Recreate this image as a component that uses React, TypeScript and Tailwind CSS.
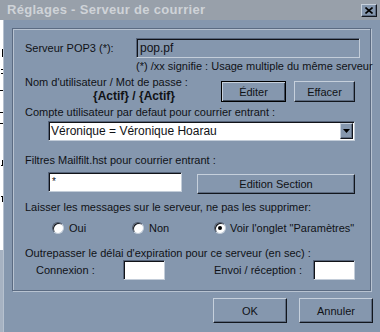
import React from 'react';

const raised =
  'bg-[#8597ae] border border-t-[#c6d0dc] border-l-[#c6d0dc] border-r-[#12161d] border-b-[#12161d] shadow-[inset_-1px_-1px_0_#5d6b80]';
const sunkenWhite =
  'bg-white border border-t-[#56647a] border-l-[#56647a] border-r-[#c3cdd9] border-b-[#c3cdd9] shadow-[inset_1px_1px_0_#111318]';

function Radio({ checked }: { checked?: boolean }) {
  return (
    <div className="w-[12px] h-[12px] rounded-full bg-white border border-t-[#4a566a] border-l-[#4a566a] border-r-[#c3cdd9] border-b-[#c3cdd9] shadow-[inset_1px_1px_0_#15181e] flex items-center justify-center">
      {checked && <div className="w-[4px] h-[4px] rounded-full bg-black" />}
    </div>
  );
}

export default function App() {
  return (
    <div className="w-[380px] h-[332px] overflow-hidden flex flex-col bg-[#8597ae] font-['Liberation_Sans',Arial,sans-serif] text-[11px] text-[#101216] leading-[12px]">
      {/* Title bar (inactive) */}
      <div className="h-[20px] flex items-center justify-between bg-[#98a0aa] pl-[7px] pr-[3px] shrink-0">
        <span className="text-[13px] font-bold tracking-[0.3px] text-[#cfd3d8]">
          Réglages - Serveur de courrier
        </span>
        <div className={`w-[16px] h-[13px] flex items-center justify-center ${raised}`}>
          <svg width="8" height="7" viewBox="0 0 8 7">
            <path d="M0.5 0.5 L7.5 6.5 M7.5 0.5 L0.5 6.5" stroke="#000" strokeWidth="1.6" />
          </svg>
        </div>
      </div>

      <div className="flex flex-1">
        {/* bits of the window behind */}
        <div className="w-[3px] flex flex-col overflow-hidden">
          <div className="h-[230px] bg-white flex flex-col items-end">
            <div className="h-[29px]" />
            <div className="h-[8px] w-px bg-black" />
            <div className="h-[12px]" />
            <div className="h-[5px] w-[2px] border-t border-b border-black" />
            <div className="h-[16px]" />
            <div className="h-px w-[3px] bg-black" />
            <div className="h-[21px]" />
            <div className="h-px w-[3px] bg-black" />
            <div className="h-[10px]" />
            <div className="h-px w-[3px] bg-black" />
            <div className="h-[36px]" />
            <div className="h-[6px] w-[2px] border-r border-b border-black" />
            <div className="h-[30px]" />
            <div className="h-[6px] w-[2px] border-r border-t border-black" />
          </div>
          <div className="flex-1 bg-[#a6b2c2]" />
        </div>
        <div className="w-px bg-[#b6c1cf]" />

        {/* dialog body */}
        <div className="flex-1 flex flex-col pl-[8px] pt-[8px]">
          <div className="w-[359px] h-[263px] border border-[#5b6b82] shadow-[1px_1px_0_#b8c3d1,inset_1px_1px_0_#b8c3d1] pl-[12px] flex flex-col">
            {/* Serveur */}
            <div className="mt-[9px] flex items-center h-[20px]">
              <span className="w-[111px]">Serveur POP3 (*):</span>
              <div className="w-[224px] h-[20px] bg-[#8597ae] border border-t-[#56647a] border-l-[#56647a] border-r-[#c3cdd9] border-b-[#c3cdd9] shadow-[inset_1px_1px_0_#111318] flex items-center pl-[3px] text-[12px]">
                pop.pf
              </div>
            </div>
            <div className="mt-[2px] ml-[111px] whitespace-nowrap">
              (*) /xx signifie : Usage multiple du même serveur
            </div>

            {/* Nom d'utilisateur / Mot de passe */}
            <div className="flex items-start">
              <div className="w-[196px] flex flex-col">
                <div className="mt-[4px] whitespace-nowrap">Nom d'utilisateur / Mot de passe :</div>
                <div className="mt-[2px] pl-[68px] font-bold text-[12px]">{'{Actif} / {Actif}'}</div>
              </div>
              <div className="mt-[9px] flex gap-[8px]">
                <div className="w-[65px] h-[21px] flex items-center justify-center bg-[#8597ae] border border-black shadow-[inset_1px_1px_0_#c6d0dc,inset_-1px_-1px_0_#3f4a5a]">
                  Éditer
                </div>
                <div className={`w-[61px] h-[21px] flex items-center justify-center ${raised}`}>
                  Effacer
                </div>
              </div>
            </div>

            <div className="mt-[4px] whitespace-nowrap">Compte utilisateur par defaut pour courrier entrant :</div>
            <div className={`mt-[3px] ml-[23px] w-[307px] h-[20px] flex items-center justify-between ${sunkenWhite}`}>
              <span className="pl-[2px] text-[12px]">Véronique = Véronique Hoarau</span>
              <div className={`w-[13px] h-[16px] mr-[1px] flex items-center justify-center ${raised}`}>
                <svg width="7" height="4" viewBox="0 0 7 4">
                  <path d="M0 0 H7 L3.5 4 Z" fill="#000" />
                </svg>
              </div>
            </div>

            <div className="mt-[13px] whitespace-nowrap">Filtres Mailfilt.hst pour courrier entrant :</div>
            <div className="flex items-start">
              <div className={`mt-[6px] ml-[23px] w-[134px] h-[20px] pl-[3px] pt-[3px] text-[10px] ${sunkenWhite}`}>*</div>
              <div className={`mt-[8px] ml-[15px] w-[158px] h-[20px] flex items-center justify-center ${raised}`}>
                Edition Section
              </div>
            </div>

            <div className="mt-[7px] whitespace-nowrap">Laisser les messages sur le serveur, ne pas les supprimer:</div>
            <div className="mt-[9px] flex items-center h-[12px] pl-[27px]">
              <div className="w-[80px] flex items-center gap-[5px]">
                <Radio />
                <span>Oui</span>
              </div>
              <div className="w-[82px] flex items-center gap-[5px]">
                <Radio />
                <span>Non</span>
              </div>
              <div className="flex items-center gap-[4px]">
                <Radio checked />
                <span className="whitespace-nowrap">Voir l'onglet "Paramètres"</span>
              </div>
            </div>

            <div className="mt-[13px] whitespace-nowrap">Outrepasser le délai d'expiration pour ce serveur (en sec) :</div>
            <div className="mt-[1px] flex items-center h-[20px] pl-[11px]">
              <span className="w-[87px]">Connexion :</span>
              <div className={`w-[42px] h-[20px] ${sunkenWhite}`} />
              <span className="ml-[49px] w-[99px] whitespace-nowrap">Envoi / réception :</span>
              <div className={`w-[42px] h-[20px] ${sunkenWhite}`} />
            </div>
          </div>

          {/* Dialog buttons */}
          <div className="mt-[7px] flex justify-end gap-[12px] pr-[7px]">
            <div className={`w-[74px] h-[25px] flex items-center justify-center ${raised}`}>OK</div>
            <div className={`w-[74px] h-[25px] flex items-center justify-center ${raised}`}>Annuler</div>
          </div>
        </div>
      </div>
    </div>
  );
}
